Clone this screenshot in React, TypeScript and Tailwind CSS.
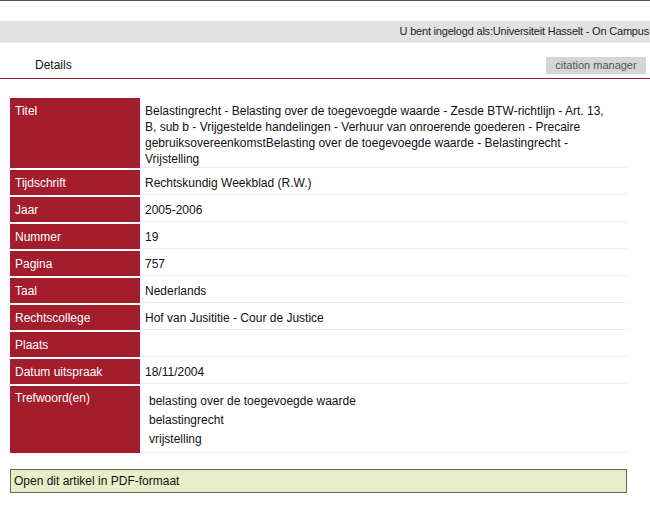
import React from "react";

const rows: { label: string; value?: string }[] = [
  { label: "Tijdschrift", value: "Rechtskundig Weekblad (R.W.)" },
  { label: "Jaar", value: "2005-2006" },
  { label: "Nummer", value: "19" },
  { label: "Pagina", value: "757" },
  { label: "Taal", value: "Nederlands" },
  { label: "Rechtscollege", value: "Hof van Jusititie - Cour de Justice" },
  { label: "Plaats", value: "" },
  { label: "Datum uitspraak", value: "18/11/2004" },
];

export default function App() {
  return (
    <div
      className="w-[650px] h-[506px] bg-white text-[12px] text-[#111] overflow-hidden"
      style={{ fontFamily: '"Liberation Sans", Arial, sans-serif' }}
    >
      <div className="h-px bg-[#555]" />
      <div className="h-[20px]" />
      <div className="h-[22px] bg-[#e2e2e2] border-b border-[#ececec] flex items-center justify-end pr-[1px] whitespace-nowrap text-[11px] tracking-[-0.2px] text-[#222]">
        U bent ingelogd als:Universiteit Hasselt - On Campus
      </div>
      <div className="h-[36px] flex items-center justify-between border-b border-[#8f1d2b] pl-[35px] pr-[4px]">
        <span className="text-[12px] text-[#111] mt-[9px]">Details</span>
        <span className="bg-[#d6d6d6] text-[#555] text-[11px] h-[17px] w-[100px] flex items-center justify-center mt-[9px]">
          citation manager
        </span>
      </div>
      <div className="pl-[10px] pr-[23px] pt-[19px] leading-[16px]">
        <div className="flex mb-[2px] h-[70px]">
          <div className="w-[130px] shrink-0 bg-[#a31d2d] text-white pl-[5px] pt-[5px]">Titel</div>
          <div className="flex-1 ml-px pl-[4px] pr-[10px] pt-[5px] border-b border-[#ebebeb]">
            Belastingrecht - Belasting over de toegevoegde waarde - Zesde BTW-richtlijn - Art. 13, B, sub b - Vrijgestelde handelingen - Verhuur van onroerende goederen - Precaire gebruiksovereenkomstBelasting over de toegevoegde waarde - Belastingrecht - Vrijstelling
          </div>
        </div>
        {rows.map((r) => (
          <div key={r.label} className="flex mb-[2px] h-[25px]">
            <div className="w-[130px] shrink-0 bg-[#a31d2d] text-white pl-[5px] pt-[5px]">
              {r.label}
            </div>
            <div className="flex-1 ml-px pl-[4px] pt-[5px] border-b border-[#ebebeb]">
              {r.value}
            </div>
          </div>
        ))}
        <div className="flex h-[67px]">
          <div className="w-[130px] shrink-0 bg-[#a31d2d] text-white pl-[5px] pt-[4px]">
            Trefwoord(en)
          </div>
          <div className="flex-1 ml-px pl-[8px] pt-[6px] border-b border-[#ebebeb] leading-[19px]">
            <div>belasting over de toegevoegde waarde</div>
            <div>belastingrecht</div>
            <div>vrijstelling</div>
          </div>
        </div>
        <div className="mt-[16px] h-[24px] bg-[#e8eec8] border border-[#666] flex items-center pl-[3px]">
          Open dit artikel in PDF-formaat
        </div>
      </div>
    </div>
  );
}
